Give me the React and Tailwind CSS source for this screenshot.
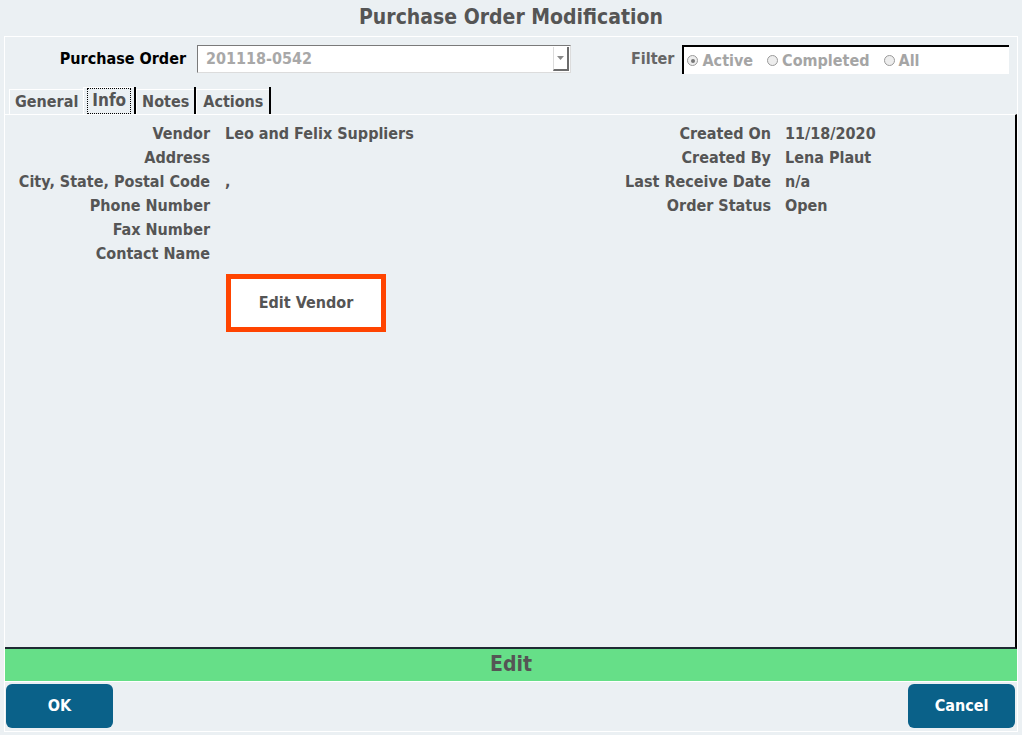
import React from 'react';

const font = { fontFamily: '"DejaVu Sans Condensed", "DejaVu Sans", Tahoma, sans-serif' };

const Radio = ({ label, checked }) => (
  <label className="flex items-center gap-[4px] mr-[14px]">
    <span className="w-[11px] h-[11px] rounded-full border border-[#9a9a9a] bg-[#ededed] flex items-center justify-center">
      {checked && <span className="w-[4px] h-[4px] rounded-full bg-[#777]" />}
    </span>
    <span className="text-[#a5a5a5]">{label}</span>
  </label>
);

const Row = ({ label, value, labelW }) => (
  <>
    <div className="text-right h-[24px] leading-[24px] whitespace-nowrap" style={{ width: labelW }}>{label}</div>
    <div className="h-[24px] leading-[24px] whitespace-nowrap">{value}</div>
  </>
);

const App = () => {
  return (
    <div className="w-[1022px] h-[735px] bg-[#ebf0f3] flex flex-col text-[16px] font-bold text-[#555]" style={font}>
      {/* title */}
      <div className="h-[36px] flex items-center justify-center text-[21px] text-[#555]">
        Purchase Order Modification
      </div>

      <div className="h-[696px] mx-[4px] border border-white flex flex-col">
        {/* purchase order row */}
        <div className="flex items-start pt-[8px] h-[50px]">
          <div className="w-[181px] h-[28px] flex items-center justify-end text-black">Purchase Order</div>
          <div className="ml-[11px] w-[374px] h-[28px] bg-white border border-[#7a7a7a] border-b-[#dcdcdc] border-r-[#dcdcdc] flex items-center">
            <span className="pl-[8px] flex-1 text-[#a8a8a8]">201118-0542</span>
            <span className="w-[16px] h-[24px] border-l border-[#dcdcdc] border-r-2 border-b-2 border-r-[#6c6c6c] border-b-[#6c6c6c] flex items-center justify-center mr-[1px]">
              <svg width="7" height="4" viewBox="0 0 7 4"><path d="M0 0h7L3.5 4z" fill="#8a8a8a" /></svg>
            </span>
          </div>
          <div className="ml-[60px] h-[28px] flex items-center text-[#666]">Filter</div>
          <div className="ml-[8px] w-[327px] h-[29px] bg-white border-t-2 border-l-2 border-black flex items-center pl-[3px]">
            <Radio label="Active" checked />
            <Radio label="Completed" />
            <Radio label="All" />
          </div>
        </div>

        {/* tabs */}
        <div className="flex items-end h-[27px] pl-[4px]">
          <div className="h-[25px] px-[5px] flex items-center border-t border-l border-white">General</div>
          <div className="h-[27px] px-[3px] flex items-center border-t border-l border-white">
            <span className="border border-dotted border-black px-[4px] h-[26px] leading-[22px] text-[17px]">Info</span>
          </div>
          <div className="h-[27px] w-[2px] bg-black" />
          <div className="h-[25px] px-[5px] flex items-center border-t border-l border-white">Notes</div>
          <div className="h-[27px] w-[2px] bg-black" />
          <div className="h-[25px] px-[6px] flex items-center border-t border-l border-white">Actions</div>
          <div className="h-[27px] w-[2px] bg-black" />
        </div>

        {/* content */}
        <div className="h-[535px] border-t border-white border-r-2 border-r-black border-b-2 border-b-[#1f2a33] flex pt-[7px]">
          <div className="w-[594px]">
            <div className="grid grid-cols-[205px_1fr] gap-x-[15px]">
              <Row labelW="205px" label="Vendor" value="Leo and Felix Suppliers" />
              <Row labelW="205px" label="Address" value="" />
              <Row labelW="205px" label="City, State, Postal Code" value="," />
              <Row labelW="205px" label="Phone Number" value="" />
              <Row labelW="205px" label="Fax Number" value="" />
              <Row labelW="205px" label="Contact Name" value="" />
            </div>
            <div className="ml-[221px] mt-[8px] w-[160px] h-[58px] border-[5px] border-[#ff4400] bg-white flex items-center justify-center">
              <span className="text-[#555]">Edit Vendor</span>
            </div>
          </div>
          <div>
            <div className="grid grid-cols-[172px_1fr] gap-x-[14px]">
              <Row labelW="172px" label="Created On" value="11/18/2020" />
              <Row labelW="172px" label="Created By" value="Lena Plaut" />
              <Row labelW="172px" label="Last Receive Date" value="n/a" />
              <Row labelW="172px" label="Order Status" value="Open" />
            </div>
          </div>
        </div>

        {/* status bar */}
        <div className="h-[33px] bg-[#66df88] border-b border-white flex items-center justify-center text-[21px] text-[#555]">
          Edit
        </div>

        {/* buttons */}
        <div className="flex justify-between items-start pt-[2px] px-[1px] flex-1">
          <button className="w-[107px] h-[44px] rounded-[6px] bg-[#0a6189] text-white font-bold text-[16px]">OK</button>
          <button className="w-[107px] h-[44px] rounded-[6px] bg-[#0a6189] text-white font-bold text-[16px] mr-[1px]">Cancel</button>
        </div>
      </div>
    </div>
  );
};

export default App;
